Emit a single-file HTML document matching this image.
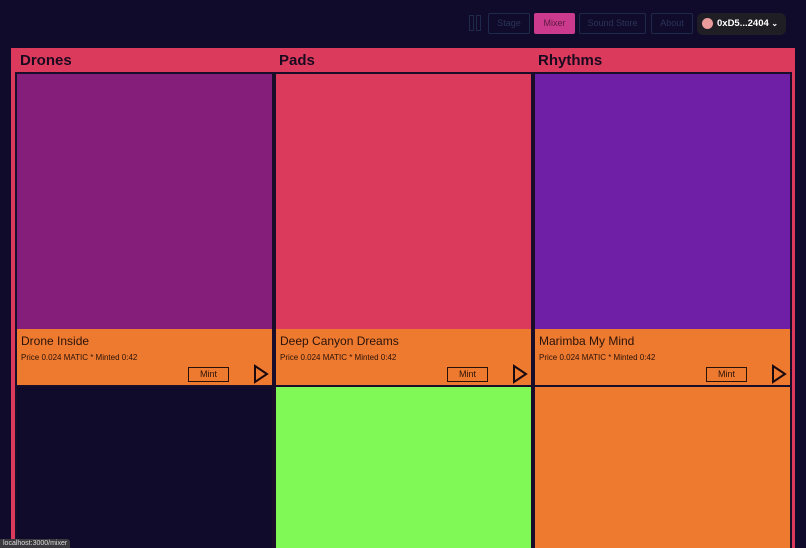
<!DOCTYPE html>
<html><head><style>
*{margin:0;padding:0;box-sizing:border-box}
html,body{width:806px;height:548px;overflow:hidden}
body{background:#100a2b;font-family:"Liberation Sans",sans-serif;position:relative}
.nav{position:absolute;top:13px;height:21px;border:1px solid #1f2a4a;color:#2a3558;font-size:9px;line-height:19px;text-align:center;border-radius:2px}
.panel{position:absolute;left:11px;top:48px;width:784px;height:500px;background:#dc3a5c}
h2{position:absolute;top:52px;font-size:15px;font-weight:bold;color:#1a0a20}
.card{position:absolute;width:259px;border:2px solid #1a0d2a}
.img{height:255px}
.info{background:#ee7a30;height:58px;position:relative;color:#2a1208}
.t{position:absolute;left:4px;top:5px;font-size:12px}
.p{position:absolute;left:4px;top:24px;font-size:8px}
.m{position:absolute;left:171px;top:38px;width:41px;height:15px;border:1.5px solid #2a1208;font-size:9px;text-align:center;line-height:12px}
.pl{position:absolute;left:236px;top:35px}
</style></head><body>
<div style="position:absolute;left:469px;top:15px;width:5px;height:16px;border:1px solid #1f2a4a"></div>
<div style="position:absolute;left:476px;top:15px;width:5px;height:16px;border:1px solid #1f2a4a"></div>
<div class="nav" style="left:488px;width:42px">Stage</div>
<div class="nav" style="left:534px;width:41px;background:#cc3a8e;border-color:#cc3a8e;color:#5a1a40">Mixer</div>
<div class="nav" style="left:579px;width:67px">Sound Store</div>
<div class="nav" style="left:651px;width:42px">About</div>
<div style="position:absolute;left:697px;top:13px;width:89px;height:22px;background:#1e1e24;border-radius:6px;color:#fff;font-size:9.5px;font-weight:bold;line-height:22px;padding-left:20px">0xD5...2404 <span style="font-size:8px">&#8964;</span></div>
<div style="position:absolute;left:702px;top:18px;width:11px;height:11px;border-radius:50%;background:#e99a9a"></div>
<div class="panel"></div>
<h2 style="left:20px">Drones</h2><h2 style="left:279px">Pads</h2><h2 style="left:538px">Rhythms</h2>

<div class="card" style="left:15px;top:72px"><div class="img" style="background:#851e7a"></div><div class="info"><div class="t">Drone Inside</div><div class="p">Price 0.024 MATIC * Minted 0:42</div><div class="m">Mint</div><svg class="pl" width="16" height="20"><path d="M2 2 L14 10 L2 18 Z" fill="none" stroke="#1a0a10" stroke-width="2"/></svg></div></div>
<div class="card" style="left:274px;top:72px"><div class="img" style="background:#dc3a5c"></div><div class="info"><div class="t">Deep Canyon Dreams</div><div class="p">Price 0.024 MATIC * Minted 0:42</div><div class="m">Mint</div><svg class="pl" width="16" height="20"><path d="M2 2 L14 10 L2 18 Z" fill="none" stroke="#1a0a10" stroke-width="2"/></svg></div></div>
<div class="card" style="left:533px;top:72px"><div class="img" style="background:#6e1fa6"></div><div class="info"><div class="t">Marimba My Mind</div><div class="p">Price 0.024 MATIC * Minted 0:42</div><div class="m">Mint</div><svg class="pl" width="16" height="20"><path d="M2 2 L14 10 L2 18 Z" fill="none" stroke="#1a0a10" stroke-width="2"/></svg></div></div>

<div class="card" style="left:15px;top:385px;height:170px;background:#100a2b"></div>
<div class="card" style="left:274px;top:385px;height:170px;background:#80f956"></div>
<div class="card" style="left:533px;top:385px;height:170px;background:#ee7a30"></div>

<div style="position:absolute;left:0;top:539px;width:70px;height:9px;background:#3a3a3e;color:#ddd;font-size:7px;line-height:9px;padding-left:3px;border-top-right-radius:3px">localhost:3000/mixer</div>
</body></html>
